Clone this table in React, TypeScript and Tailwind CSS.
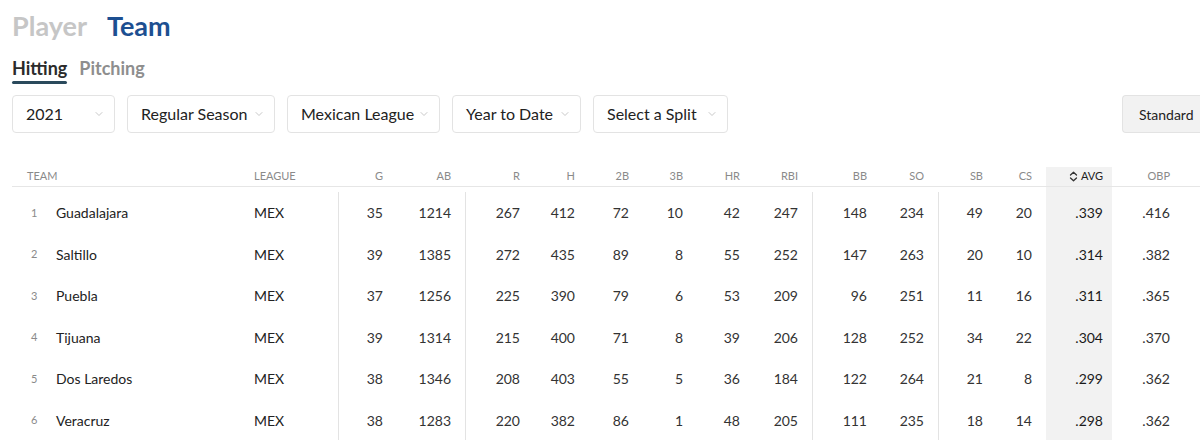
import { ChevronDown } from "lucide-react";

type Row = {
  rank: number;
  team: string;
  league: string;
  stats: string[];
};

const STAT_COLS = ["G", "AB", "R", "H", "2B", "3B", "HR", "RBI", "BB", "SO", "SB", "CS", "AVG", "OBP"];

const ROWS: Row[] = [
  { rank: 1, team: "Guadalajara", league: "MEX", stats: ["35", "1214", "267", "412", "72", "10", "42", "247", "148", "234", "49", "20", ".339", ".416"] },
  { rank: 2, team: "Saltillo", league: "MEX", stats: ["39", "1385", "272", "435", "89", "8", "55", "252", "147", "263", "20", "10", ".314", ".382"] },
  { rank: 3, team: "Puebla", league: "MEX", stats: ["37", "1256", "225", "390", "79", "6", "53", "209", "96", "251", "11", "16", ".311", ".365"] },
  { rank: 4, team: "Tijuana", league: "MEX", stats: ["39", "1314", "215", "400", "71", "8", "39", "206", "128", "252", "34", "22", ".304", ".370"] },
  { rank: 5, team: "Dos Laredos", league: "MEX", stats: ["38", "1346", "208", "403", "55", "5", "36", "184", "122", "264", "21", "8", ".299", ".362"] },
  { rank: 6, team: "Veracruz", league: "MEX", stats: ["38", "1283", "220", "382", "86", "1", "48", "205", "111", "235", "18", "14", ".298", ".362"] },
];

const FILTERS = [
  { label: "2021", width: "w-[103px]" },
  { label: "Regular Season", width: "w-[148px]" },
  { label: "Mexican League", width: "w-[153px]" },
  { label: "Year to Date", width: "w-[129px]" },
  { label: "Select a Split", width: "w-[135px]" },
];

// columns that get a divider on their left edge
const DIVIDERS = ["G", "R", "BB", "SB"];

const GRID =
  "grid grid-cols-[234px_92px_59px_68px_69px_55px_54px_54px_57px_58px_69px_57px_59px_49px_66px_72px_1fr]";

const SortIcon = () => (
  <svg width="9" height="11" viewBox="0 0 9 11" fill="none" stroke="#333" strokeWidth="1.3" strokeLinecap="round" strokeLinejoin="round">
    <path d="M1.5 4 4.5 1.2 7.5 4" />
    <path d="M1.5 7 4.5 9.8 7.5 7" />
  </svg>
);

const Dropdown = ({ label, width }: { label: string; width: string }) => (
  <div className={`flex h-[38px] ${width} items-center justify-between rounded-[4px] border border-[#e3e3e3] pl-[13px] pr-[9px] text-[16px] text-[#222]`}>
    <span>{label}</span>
    <ChevronDown className="h-[12px] w-[12px] text-[#b5b5b5]" strokeWidth={1.5} />
  </div>
);

export default function App() {
  return (
    <div className="h-[440px] w-[1200px] overflow-hidden bg-white font-['Lato','Liberation_Sans',sans-serif]">
      <div className="flex gap-5 pl-3 pt-[10px] text-[27px] font-bold leading-[32px]">
        <span className="text-[#c6c6c6]">Player</span>
        <span className="text-[#1d4f91]">Team</span>
      </div>

      <div className="mt-[14px] flex gap-[12px] pl-3 text-[18px] font-bold leading-[24px]">
        <div className="flex flex-col">
          <span className="text-[#2b2b2b]">Hitting</span>
          <span className="mt-[1px] h-[3px] rounded-full bg-[#2a4a5c]" />
        </div>
        <span className="text-[#8e8e8e]">Pitching</span>
      </div>

      <div className="mt-[11px] flex items-center pl-3">
        <div className="flex gap-3">
          {FILTERS.map((f) => (
            <Dropdown key={f.label} label={f.label} width={f.width} />
          ))}
        </div>
        <div className="ml-auto flex h-[38px] w-[78px] items-center rounded-l-[4px] border border-r-0 border-[#e3e3e3] bg-[#f2f2f2] pl-[16px] text-[14px] text-[#222]">
          Standard
        </div>
      </div>

      <div className="mt-[34px] pl-3">
        {/* header */}
        <div className={`${GRID} h-[20px] items-stretch border-b border-[#e6e6e6] text-[11px] uppercase text-[#8a8a8a]`}>
          <div className="flex items-center pl-[15px]">Team</div>
          <div className="flex items-center pl-[8px]">League</div>
          {STAT_COLS.map((c) =>
            c === "AVG" ? (
              <div key={c} className="flex items-center justify-end gap-[3px] bg-[#f2f2f2] pr-[9px] text-[#222]">
                <SortIcon />
                <span>AVG</span>
              </div>
            ) : (
              <div key={c} className="flex items-center justify-end pr-[14px]">
                {c}
              </div>
            )
          )}
          <div />
        </div>

        {/* spacer under header */}
        <div className={`${GRID} h-[5px]`}>
          {Array.from({ length: 17 }).map((_, i) => (
            <div key={i} className={i === 14 ? "bg-[#f2f2f2]" : ""} />
          ))}
        </div>

        {ROWS.map((r) => (
          <div key={r.rank} className={`${GRID} h-[41.5px] text-[14px] text-[#333]`}>
            <div className="flex items-center">
              <span className="w-[44px] pl-[19px] text-[11px] text-[#8a8a8a]">{r.rank}</span>
              <span className="text-[#222]">{r.team}</span>
            </div>
            <div className="flex items-center pl-[8px] text-[#222]">{r.league}</div>
            {r.stats.map((s, i) => {
              const col = STAT_COLS[i];
              if (col === "AVG") {
                return (
                  <div key={col} className="flex items-center justify-end bg-[#f2f2f2] pr-[9px] text-[#1a1a1a]">
                    {s}
                  </div>
                );
              }
              return (
                <div
                  key={col}
                  className={
                    DIVIDERS.includes(col)
                      ? "flex items-center justify-end border-l border-[#e3e3e3] pr-[14px]"
                      : "flex items-center justify-end pr-[14px]"
                  }
                >
                  {s}
                </div>
              );
            })}
            <div />
          </div>
        ))}
      </div>
    </div>
  );
}
